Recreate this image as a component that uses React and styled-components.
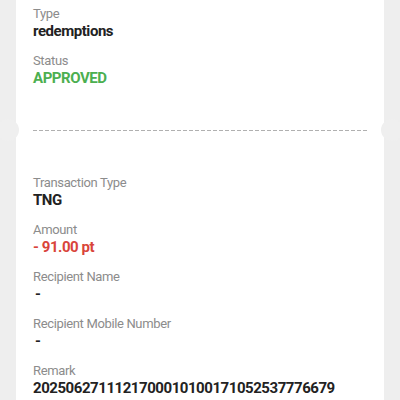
import React from "react";
import styled, { createGlobalStyle } from "styled-components";

const Global = createGlobalStyle`
  html, body { margin: 0; padding: 0; background: #eeeeee; }
  body { font-family: Roboto, "Noto Sans", "Liberation Sans", sans-serif; }
`;

const Page = styled.div`
  padding: 0 16px;
  height: 400px;
  overflow: hidden;
`;

const Card = styled.div`
  background: #ffffff;
  display: flex;
  flex-direction: column;
`;

const Section = styled.div`
  display: flex;
  flex-direction: column;
  gap: 13px;
  padding: ${(p) => p.$pad};
`;

const Field = styled.div`
  display: flex;
  flex-direction: column;
`;

const Label = styled.div`
  font-size: 13px;
  line-height: 16px;
  letter-spacing: -0.35px;
  color: #8c8c8c;
`;

const Value = styled.div`
  font-size: 15px;
  line-height: 18px;
  letter-spacing: -0.45px;
  font-weight: 700;
  color: ${(p) => p.$color || "#222222"};
  padding-left: ${(p) => (p.$dash ? "2px" : "0")};
`;

const Divider = styled.div`
  position: relative;
  height: 24px;
  display: flex;
  align-items: center;
  padding: 0 16px 0 17px;
`;

const DashLine = styled.div`
  flex: 1;
  height: 1px;
  background: repeating-linear-gradient(
    to right,
    #b0b0b0 0 4px,
    transparent 4px 6px
  );
`;

const Notch = styled.div`
  position: absolute;
  top: 1px;
  ${(p) => (p.$side === "left" ? "left: -19px;" : "right: -19px;")}
  width: 22px;
  height: 22px;
  border-radius: 50%;
  background: #efefef;
`;

const top = [
  { label: "Type", value: "redemptions" },
  { label: "Status", value: "APPROVED", color: "#4caf50" },
];

const bottom = [
  { label: "Transaction Type", value: "TNG" },
  { label: "Amount", value: "- 91.00 pt", color: "#d9443a" },
  { label: "Recipient Name", value: "-", dash: true },
  { label: "Recipient Mobile Number", value: "-", dash: true },
  { label: "Remark", value: "2025062711121700010100171052537776679" },
];

const Row = ({ f }) => (
  <Field>
    <Label>{f.label}</Label>
    <Value $color={f.color} $dash={f.dash}>{f.value}</Value>
  </Field>
);

export default function App() {
  return (
    <>
      <Global />
      <Page>
        <Card>
          <Section $pad="6px 17px 31px">
            {top.map((f) => (
              <Row key={f.label} f={f} />
            ))}
          </Section>
          <Divider>
            <Notch $side="left" />
            <DashLine />
            <Notch $side="right" />
          </Divider>
          <Section $pad="33px 17px 40px">
            {bottom.map((f) => (
              <Row key={f.label} f={f} />
            ))}
          </Section>
        </Card>
      </Page>
    </>
  );
}
